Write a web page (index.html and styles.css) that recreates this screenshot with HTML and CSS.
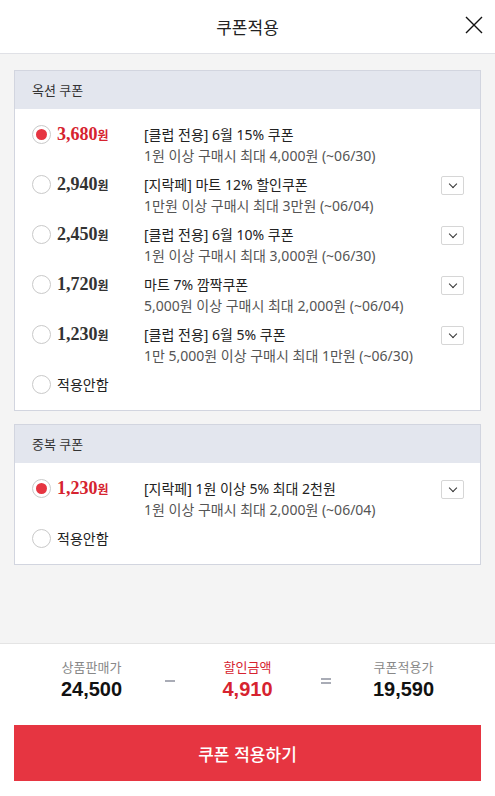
FILE: index.html
```html
<!DOCTYPE html>
<html lang="ko">
<head>
  <meta charset="UTF-8">
  <meta name="viewport" content="width=device-width, initial-scale=1.0">
  <title>쿠폰적용</title>
  <link rel="stylesheet" href="styles.css">
</head>
<body>
<div class="sheet">
  <div class="top">
    <h1>쿠폰적용</h1>
    <button class="close" aria-label="닫기">
      <svg width="18" height="18" viewBox="0 0 18 18"><path d="M1 1L17 17M17 1L1 17" stroke="#111" stroke-width="1.4" fill="none"/></svg>
    </button>
  </div>

  <div class="list">
    <div class="card">
      <div class="card-head">옥션 쿠폰</div>
      <div class="card-body">
        <div class="row">
          <span class="radio on"></span>
          <span class="price on">3,680<small>원</small></span>
          <div class="desc">
            <p>[클럽 전용] 6월 15% 쿠폰</p>
            <p class="sub">1원 이상 구매시 최대 4,000원 (~06/30)</p>
          </div>
        </div>
        <div class="row">
          <span class="radio"></span>
          <span class="price">2,940<small>원</small></span>
          <div class="desc">
            <p>[지락페] 마트 12% 할인쿠폰</p>
            <p class="sub">1만원 이상 구매시 최대 3만원 (~06/04)</p>
          </div>
          <span class="more"></span>
        </div>
        <div class="row">
          <span class="radio"></span>
          <span class="price">2,450<small>원</small></span>
          <div class="desc">
            <p>[클럽 전용] 6월 10% 쿠폰</p>
            <p class="sub">1원 이상 구매시 최대 3,000원 (~06/30)</p>
          </div>
          <span class="more"></span>
        </div>
        <div class="row">
          <span class="radio"></span>
          <span class="price">1,720<small>원</small></span>
          <div class="desc">
            <p>마트 7% 깜짝쿠폰</p>
            <p class="sub">5,000원 이상 구매시 최대 2,000원 (~06/04)</p>
          </div>
          <span class="more"></span>
        </div>
        <div class="row">
          <span class="radio"></span>
          <span class="price">1,230<small>원</small></span>
          <div class="desc">
            <p>[클럽 전용] 6월 5% 쿠폰</p>
            <p class="sub">1만 5,000원 이상 구매시 최대 1만원 (~06/30)</p>
          </div>
          <span class="more"></span>
        </div>
        <div class="row">
          <span class="radio"></span>
          <span class="none">적용안함</span>
        </div>
      </div>
    </div>

    <div class="card">
      <div class="card-head">중복 쿠폰</div>
      <div class="card-body">
        <div class="row">
          <span class="radio on"></span>
          <span class="price on">1,230<small>원</small></span>
          <div class="desc">
            <p>[지락페] 1원 이상 5% 최대 2천원</p>
            <p class="sub">1원 이상 구매시 최대 2,000원 (~06/04)</p>
          </div>
          <span class="more"></span>
        </div>
        <div class="row">
          <span class="radio"></span>
          <span class="none">적용안함</span>
        </div>
      </div>
    </div>
  </div>

  <div class="bottom">
    <div class="summary">
      <div class="sum">
        <span class="label">상품판매가</span>
        <strong class="value">24,500</strong>
      </div>
      <span class="op minus"></span>
      <div class="sum sale">
        <span class="label">할인금액</span>
        <strong class="value">4,910</strong>
      </div>
      <span class="op equal"></span>
      <div class="sum">
        <span class="label">쿠폰적용가</span>
        <strong class="value">19,590</strong>
      </div>
    </div>
    <button class="apply">쿠폰 적용하기</button>
  </div>
</div>
</body>
</html>
```

FILE: styles.css
```css
body {
  margin: 0;
  font-family: "Noto Sans", "Noto Sans CJK KR", sans-serif;
  color: #222;
  background-color: #fff;
}

p {
  margin: 0;
}

.sheet {
  height: 100vh;
  display: flex;
  flex-direction: column;
}

.top {
  position: relative;
  height: 53px;
  flex: none;
  display: flex;
  align-items: center;
  justify-content: center;
  border-bottom: 1px solid #e0e1e6;
}

.top h1 {
  margin: 0;
  font-size: 17px;
  font-weight: normal;
  color: #222;
}

.close {
  all: unset;
  position: absolute;
  right: 12px;
  top: 16px;
  width: 18px;
  height: 18px;
  cursor: pointer;
}

.close svg {
  display: block;
}

.list {
  flex: 1;
  background-color: #f4f4f4;
  padding: 16px 14px 0;
  display: flex;
  flex-direction: column;
  gap: 13px;
}

.card {
  background-color: #fff;
  border: 1px solid #d2d5df;
}

.card-head {
  height: 38px;
  line-height: 38px;
  padding-left: 17px;
  background-color: #e3e6ee;
  font-size: 13px;
  color: #333;
}

.card-body {
  padding: 15px 16px 15px 17px;
  display: flex;
  flex-direction: column;
  gap: 8px;
}

.row {
  display: flex;
  align-items: flex-start;
}

.radio {
  flex: none;
  box-sizing: border-box;
  width: 19px;
  height: 19px;
  margin-top: 1px;
  border: 1px solid #c9c9c9;
  border-radius: 50%;
  display: flex;
  align-items: center;
  justify-content: center;
}

.radio.on::after {
  content: "";
  width: 11px;
  height: 11px;
  border-radius: 50%;
  background-color: #e63541;
}

.price {
  flex: none;
  width: 87px;
  margin-left: 6px;
  font-family: "Liberation Serif", serif;
  font-weight: bold;
  font-size: 18px;
  line-height: 21px;
  color: #333;
}

.price small {
  font-family: "Noto Sans CJK KR", sans-serif;
  font-size: 12px;
}

.price.on {
  color: #d6232f;
}

.desc {
  flex: 1;
  font-size: 14px;
  line-height: 21px;
  color: #222;
}

.desc .sub {
  color: #555;
}

.none {
  margin-left: 6px;
  font-size: 14px;
  line-height: 21px;
  color: #222;
}

.more {
  flex: none;
  box-sizing: border-box;
  width: 23px;
  height: 19px;
  margin-top: 2px;
  border: 1px solid #d6d6d6;
  border-radius: 2px;
  position: relative;
}

.more::after {
  content: "";
  position: absolute;
  left: 8px;
  top: 4px;
  width: 5px;
  height: 5px;
  border-right: 1.5px solid #333;
  border-bottom: 1.5px solid #333;
  transform: rotate(45deg);
}

.bottom {
  flex: none;
  border-top: 1px solid #e4e4e4;
  padding: 14px 14px 15px;
}

.summary {
  display: grid;
  grid-template-columns: repeat(5, 78px);
  justify-content: center;
  align-items: center;
}

.sum {
  display: flex;
  flex-direction: column;
  align-items: center;
}

.label {
  font-size: 13px;
  line-height: 18px;
  color: #888;
  margin-bottom: 1px;
}

.value {
  font-family: "Liberation Sans", sans-serif;
  font-size: 20px;
  line-height: 24px;
  color: #111;
}

.sale .label,
.sale .value {
  color: #d6232f;
}

.op {
  justify-self: center;
  width: 10px;
  margin-top: 2px;
}

.minus {
  height: 2px;
  background-color: #a9acb6;
}

.equal {
  height: 2px;
  border-top: 2px solid #a9acb6;
  border-bottom: 2px solid #a9acb6;
}

.apply {
  all: unset;
  display: block;
  box-sizing: border-box;
  width: 100%;
  height: 56px;
  margin-top: 24px;
  background-color: #e63541;
  color: #fff;
  text-align: center;
  font-family: "Noto Sans CJK KR", sans-serif;
  font-size: 17px;
  font-weight: 500;
  cursor: pointer;
}
```
